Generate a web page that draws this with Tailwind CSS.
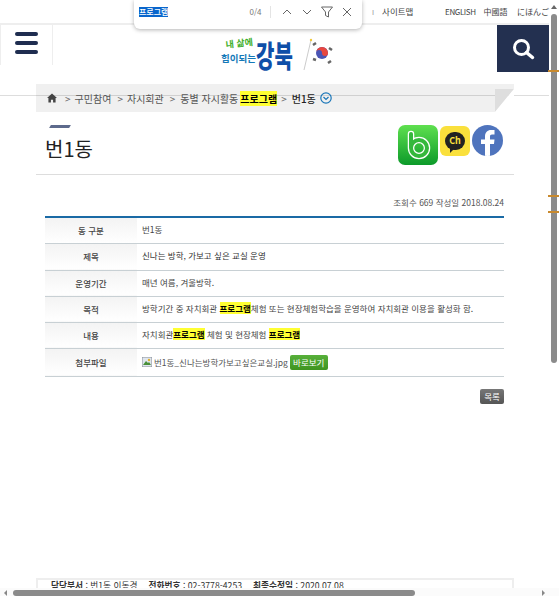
<!DOCTYPE html>
<html lang="ko">
<head>
    <meta charset="UTF-8">
    <meta name="viewport" content="width=device-width, initial-scale=1.0">
    <title>번1동 - 동별 자시활동 프로그램</title>
    <script src="https://cdn.jsdelivr.net/npm/@tailwindcss/browser@4"></script>
</head>
<body class="bg-white overflow-hidden font-['Noto_Sans_CJK_KR','Noto_Sans',sans-serif] text-[#444]">
<div class="relative w-[559px] h-[596px] overflow-hidden">

    <!-- page -->
    <div class="w-[549px] h-[596px] flex flex-col">
        <!-- top links -->
        <div class="h-[25px] border-b-2 border-[#eee] flex items-center text-[8px] leading-none">
            <span class="ml-[372px] text-[#999]">ı</span>
            <span class="ml-[8px] w-[64px] text-[8.500px]">사이트맵</span>
            <span class="w-[39px] tracking-[-0.4px]">ENGLISH</span>
            <span class="w-[34px]">中國語</span>
            <span class="whitespace-nowrap">にほんご</span>
        </div>

        <!-- header -->
        <div class="h-[71px] border-b border-[#ddd] flex items-start justify-between">
            <button class="w-[53px] h-[40px] border-x border-[#eee] flex flex-col items-center justify-center gap-[5px] pb-[5px]">
                <span class="w-[23px] h-[4px] rounded-full bg-[#1f2d50]"></span>
                <span class="w-[23px] h-[4px] rounded-full bg-[#1f2d50]"></span>
                <span class="w-[23px] h-[4px] rounded-full bg-[#1f2d50]"></span>
            </button>
            <svg class="mt-[10px] ml-[3px]" width="118" height="44" viewBox="0 0 118 44">
                <text x="8" y="13" font-size="9" font-weight="700" fill="#3fae2a" transform="rotate(-6 8 13)">내 삶에</text>
                <text x="3" y="27" font-size="9.500" font-weight="700" fill="#1479b8">힘이되는</text>
                <text transform="translate(38 32) scale(1 1.500)" font-size="20" font-weight="900" fill="#0f4fa8">강북</text>
                <line x1="86" y1="35" x2="93" y2="5" stroke="#ccc" stroke-width="1"/>
                <circle cx="93" cy="5" r="1.200" fill="#f0c93c"/>
                <path d="M95 10l3-2M95 24l3 1M111 13l3 2M110 28l3-2" stroke="#666" stroke-width="2.500"/>
                <circle cx="104" cy="18" r="6" fill="#4a55b5"/>
                <path d="M98 18a6 6 0 0 1 12 0a3 3 0 0 1-6 0a3 3 0 0 0-6 0z" fill="#e8473f"/>
            </svg>
            <button class="w-[52px] h-[47px] bg-[#233050] flex items-center justify-center">
                <svg width="24" height="24" viewBox="0 0 24 24" fill="none" stroke="#fff">
                    <circle cx="10.500" cy="10.500" r="7" stroke-width="3"/>
                    <path d="M15.500 15.500l6 5" stroke-width="3.500" stroke-linecap="round"/>
                </svg>
            </button>
        </div>

        <!-- breadcrumb -->
        <div class="relative ml-[36px] w-[478px] h-[28px] -mt-[12px] bg-black/6 flex items-center pl-[11px] text-[10px] text-[#555] whitespace-nowrap">
            <svg width="10" height="10" viewBox="0 0 12 11" fill="#444"><path d="M6 0L0 5.500h1.700V11h3V7.500h2.600V11h3V5.500H12z"/></svg>
            <span class="ml-[8px] text-[#666]">&gt;</span>
            <span class="ml-[4px]">구민참여</span>
            <span class="ml-[6px] text-[#666]">&gt;</span>
            <span class="ml-[4px]">자시회관</span>
            <span class="ml-[6px] text-[#666]">&gt;</span>
            <span class="ml-[5px]">동별 자시활동</span>
            <mark class="ml-[2px] px-0 bg-[#ffff33] text-black font-bold">프로그램</mark>
            <span class="ml-[4px] text-[#666]">&gt;</span>
            <span class="ml-[5px] text-[#222] font-medium">번1동</span>
            <svg class="ml-[4px]" width="12" height="12" viewBox="0 0 12 12" fill="none" stroke="#1a76b8"><circle cx="6" cy="6" r="5.200" stroke-width="1.200"/><path d="M3.500 5l2.500 2.500L8.500 5" stroke-width="1.200"/></svg>
            <svg class="absolute right-0 top-0" width="19" height="28" viewBox="0 0 19 28"><path d="M0 5h19L0 28z" fill="#dedede"/><path d="M19 5v23H0z" fill="#fff"/></svg>
        </div>

        <!-- title -->
        <div class="ml-[36px] w-[478px] h-[63px] border-b border-[#ddd] flex justify-between pl-[9px] pr-[11px]">
            <div class="pt-[13px]">
                <div class="ml-[5px] w-[20px] h-[3px] bg-[#5d6a8c] -skew-x-[30deg]"></div>
                <h1 class="mt-[6px] text-[20px] leading-[30px] text-[#222]">번1동</h1>
            </div>
            <div class="flex items-start gap-[2px] pt-[13px]">
                <svg width="40" height="40" viewBox="0 0 40 40" fill="none">
                    <defs><linearGradient id="band" x1="0" y1="0" x2="0" y2="1"><stop offset="0" stop-color="#5fe04f"/><stop offset="1" stop-color="#0c9a2a"/></linearGradient></defs>
                    <rect width="40" height="40" rx="7" fill="url(#band)"/>
                    <path d="M13 9v14a8 8 0 1 0 8-8a8 8 0 0 0-8 8" stroke="#fff" stroke-width="6.500" stroke-linecap="round"/>
                    <path d="M13 9v14a8 8 0 1 0 8-8a8 8 0 0 0-8 8" stroke="#34b83c" stroke-width="4" stroke-linecap="round"/>
                </svg>
                <div class="w-[30px] h-[30px] mt-[1px] rounded-[6px] bg-[#fae03c] flex items-center justify-center">
                    <div class="relative w-[20px] h-[18px] rounded-full bg-[#222] text-[#fae03c] text-[9px] leading-[18px] font-bold text-center">Ch<span class="absolute left-[5px] -bottom-[3px] w-0 h-0 border-t-[5px] border-r-[5px] border-t-[#222] border-r-transparent"></span></div>
                </div>
                <div class="w-[31px] h-[31px] rounded-full bg-[#4f74bd] overflow-hidden flex items-end justify-center">
                    <svg width="14" height="26" viewBox="0 0 14 26" fill="#fff"><path d="M4 26V14H0V9.500h4V6.500C4 2.500 6.500 0 10 0h3.500v4.500H11C9.500 4.500 9 5.200 9 6.800v2.700h4.500L13 14H9v12z"/></svg>
                </div>
            </div>
        </div>

        <!-- article -->
        <div class="ml-[45px] w-[459px] text-[8.500px]">
            <p class="h-[41px] pt-[20px] leading-[15px] text-right text-[#555]">조회수 669 작성일 2018.08.24</p>
            <table class="w-full table-fixed border-t-2 border-[#1a6aa5] border-collapse">
                <tbody>
                    <tr class="h-[26px] border-b border-[#c8d0d4]">
                        <th class="w-[92px] font-medium bg-linear-to-b from-[#f3f3f3] to-white">동 구분</th>
                        <td class="pl-[5px] pb-[2px]">번1동</td>
                    </tr>
                    <tr class="h-[27px] border-b border-[#c8d0d4]">
                        <th class="font-medium bg-linear-to-b from-[#f3f3f3] to-white">제목</th>
                        <td class="pl-[5px] pb-[2px] text-[#333]">신나는 방학, 가보고 싶은 교실 운영</td>
                    </tr>
                    <tr class="h-[26px] border-b border-[#c8d0d4]">
                        <th class="font-medium bg-linear-to-b from-[#f3f3f3] to-white">운영기간</th>
                        <td class="pl-[5px] pb-[2px]">매년 여름, 겨울방학.</td>
                    </tr>
                    <tr class="h-[26px] border-b border-[#c8d0d4]">
                        <th class="font-medium bg-linear-to-b from-[#f3f3f3] to-white">목적</th>
                        <td class="pl-[5px] pb-[2px] whitespace-nowrap">방학기간 중 자치회관 <mark class="bg-[#ffff33] text-black font-bold">프로그램</mark>체험 또는 현장체험학습을 운영하여 자치회관 이용을 활성화 함.</td>
                    </tr>
                    <tr class="h-[26px] border-b border-[#c8d0d4]">
                        <th class="font-medium bg-linear-to-b from-[#f3f3f3] to-white">내용</th>
                        <td class="pl-[5px] pb-[2px]">자치회관<mark class="bg-[#ffff33] text-black font-bold">프로그램</mark> 체험 및 현장체험 <mark class="bg-[#ffff33] text-black font-bold">프로그램</mark></td>
                    </tr>
                    <tr class="h-[28px] border-b border-[#c8d0d4]">
                        <th class="font-medium bg-linear-to-b from-[#f3f3f3] to-white">첨부파일</th>
                        <td class="pl-[5px]">
                            <div class="flex items-center">
                                <svg width="10" height="10" viewBox="0 0 10 10"><rect width="10" height="10" fill="#dfe6ee" stroke="#8a8f99"/><path d="M1 8l3-4 2 2 1-1 2 3z" fill="#4a8f3a"/><circle cx="7" cy="3" r="1.200" fill="#e0b030"/></svg>
                                <span class="ml-[2px] text-[#555]">번1동_신나는방학가보고싶은교실.jpg</span>
                                <a class="ml-[2px] w-[38px] h-[15px] rounded-[2px] bg-linear-to-b from-[#57b03a] to-[#3f9420] text-white text-[8.500px] leading-[15px] text-center">바로보기</a>
                            </div>
                        </td>
                    </tr>
                </tbody>
            </table>
            <div class="flex justify-end mt-[12px]">
                <a class="w-[24px] h-[15px] rounded-[2px] bg-linear-to-b from-[#777] to-[#555] text-white text-[8.500px] leading-[15px] text-center">목록</a>
            </div>
        </div>

        <!-- footer info -->
        <div class="absolute left-[36px] top-[578px] w-[478px] h-[18px] border-2 border-[#eee] pl-[13px] text-[8.700px] leading-[12px] text-[#333] whitespace-nowrap">
            <b class="font-bold">담당부서</b> : 번1동 이동경<b class="ml-[11px] font-bold">전화번호</b> : 02-3778-4253<b class="ml-[11px] font-bold">최종수정일</b> : 2020.07.08
        </div>
    </div>

    <!-- browser find bar -->
    <div class="absolute left-[134px] top-0 w-[228px] h-[29px] bg-white rounded-b-[6px] shadow-[0_1px_4px_rgba(0,0,0,0.3)] flex items-center text-[8px]">
        <span class="ml-[5px] mb-[5px] bg-[#0a66cc] text-white leading-[10px] font-medium">프로그램</span>
        <span class="ml-[81px] mb-[5px] text-[#777]">0/4</span>
        <span class="ml-[9px] mb-[5px] w-px h-[12px] bg-[#e4e4e4]"></span>
        <div class="flex items-center gap-[6px] ml-[9px] mb-[5px]">
            <svg width="14" height="14" viewBox="0 0 14 14" fill="none" stroke="#666"><path d="M3 9l4-4 4 4"/></svg>
            <svg width="14" height="14" viewBox="0 0 14 14" fill="none" stroke="#666"><path d="M3 5l4 4 4-4"/></svg>
            <svg width="14" height="14" viewBox="0 0 14 14" fill="none" stroke="#666"><path d="M1.500 2h11L8.500 7v5l-3-1.500V7z"/></svg>
            <svg width="14" height="14" viewBox="0 0 14 14" fill="none" stroke="#666"><path d="M3 3l8 8M11 3l-8 8"/></svg>
        </div>
    </div>

    <!-- vertical scrollbar -->
    <div class="absolute right-0 top-0 w-[9px] h-[588px] bg-white/60">
        <div class="absolute left-[1px] top-[14px] w-[6px] h-[349px] rounded-full bg-[#8b8b8b]"></div>
        <div class="absolute -left-[2px] w-[11px] h-[2px] top-[70px] bg-[#c98a2e]"></div>
        <div class="absolute -left-[2px] w-[11px] h-[2px] top-[195px] bg-[#c98a2e]"></div>
        <div class="absolute -left-[2px] w-[11px] h-[2px] top-[211px] bg-[#c98a2e]"></div>
        <div class="absolute left-[1px] top-[5px] w-0 h-0 border-x-[3px] border-b-[4px] border-x-transparent border-b-[#666]"></div>
    </div>

    <!-- horizontal scrollbar -->
    <div class="absolute left-0 bottom-0 w-[559px] h-[8px] bg-[#fbfbfb]">
        <div class="absolute left-[13px] top-[2px] w-[402px] h-[6px] rounded-full bg-[#8b8b8b]"></div>
        <div class="absolute left-[4px] top-[2px] w-0 h-0 border-y-[3px] border-r-[3px] border-y-transparent border-r-[#888]"></div>
        <div class="absolute left-[542px] top-[2px] w-0 h-0 border-y-[3px] border-l-[3px] border-y-transparent border-l-[#888]"></div>
    </div>
</div>
</body>
</html>
